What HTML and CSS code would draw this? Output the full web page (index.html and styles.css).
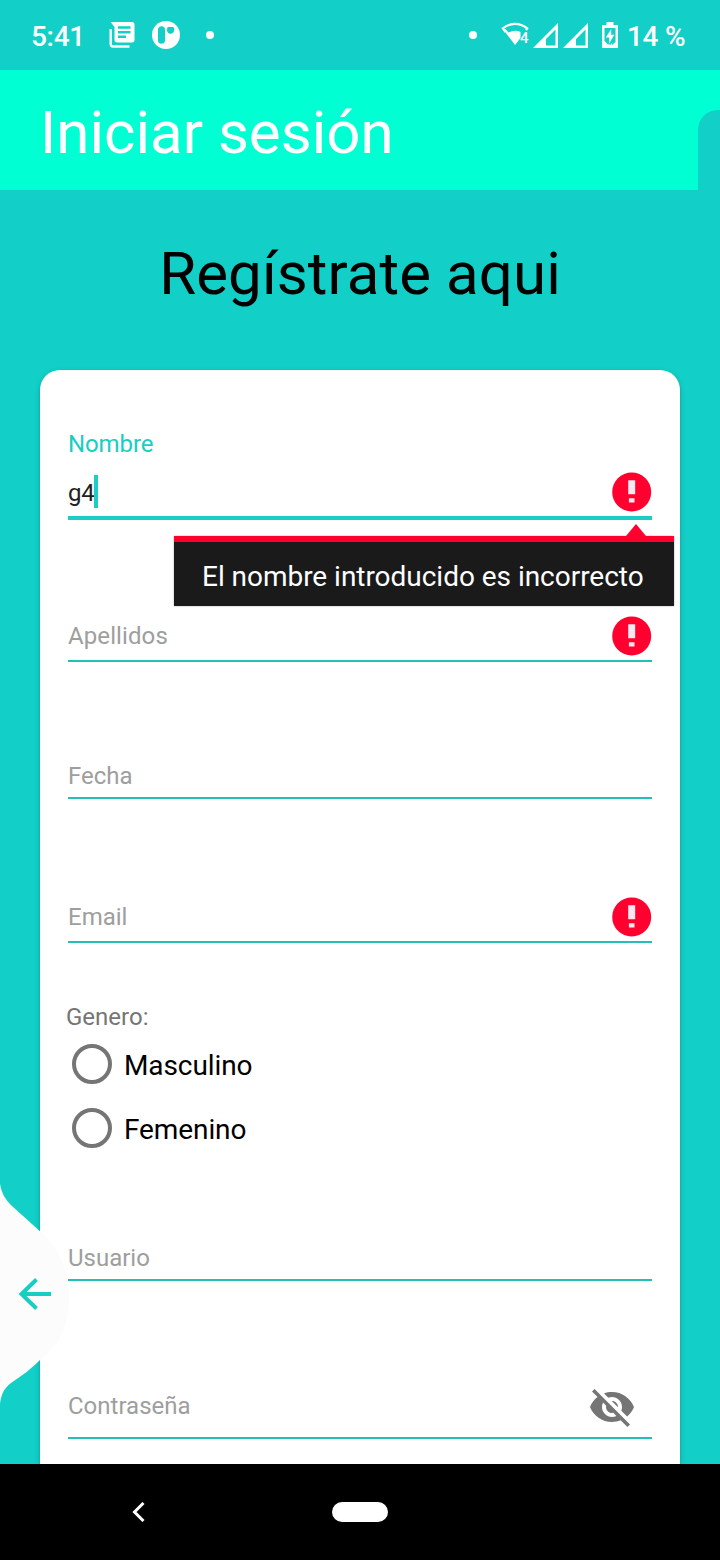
FILE: index.html
```html
<!DOCTYPE html>
<html lang="es">
<head>
<meta charset="utf-8">
<title>Iniciar sesión</title>
<link rel="stylesheet" href="styles.css">
</head>
<body>
<div class="screen">
  <div class="status">
    <span class="clock">5:41</span>
    <svg class="ico-news" width="26" height="26" viewBox="0 0 26 26"><path fill="#fff" fill-rule="evenodd" d="M1.500 0H23Q25.500 0 25.500 2.500V18Q25.500 20.500 23 20.500H8.500Q5.500 20.500 5.500 18V5ZM9 4.300V6.800H21.500V4.300ZM9 9V11.500H21.500V9ZM9 13.500V16H17V13.500Z"/><path fill="none" stroke="#fff" stroke-width="2.400" d="M1.700 7V22Q1.700 24.500 4 24.500H20.500"/></svg>
    <svg class="ico-app" width="28" height="28" viewBox="0 0 28 28"><circle cx="14" cy="14" r="14" fill="#fff"/><rect x="6" y="5.200" width="7" height="17.500" rx="3.500" fill="#12d0c7"/><path fill="#12d0c7" d="M16 6H20.500Q22.500 6 22.300 9Q21.800 12.700 18.500 12.700Q15 12.700 15 9Q15 6.500 16 6Z"/></svg>
    <span class="dot dot-left"></span>
    <span class="dot dot-right"></span>
    <svg class="ico-wifi" width="28" height="26" viewBox="0 0 28 26"><path d="M4.500 10L1.800 6.300Q14-2.500 26.200 6.300L25 8" fill="none" stroke="#fff" stroke-width="2.200"/><path d="M3 8.500L14 23L19.500 16V10Q14 7.500 7.500 10.500L4.500 7Z" fill="#fff"/><text class="wifi-num" x="19" y="20.500">4</text></svg>
    <svg class="ico-sig" width="25" height="25" viewBox="0 0 25 25"><path fill="#fff" fill-rule="evenodd" d="M25 0V25H0ZM22.500 6.500L13 16V22.500H22.500Z"/></svg>
    <svg class="ico-sig second" width="25" height="25" viewBox="0 0 25 25"><path fill="#fff" fill-rule="evenodd" d="M25 0V25H0ZM22.500 6.500L13 16V22.500H22.500Z"/></svg>
    <svg class="ico-bat" width="16" height="26" viewBox="0 0 16 26"><path fill="#fff" d="M4.500 0H11.500V3H16V26H0V3H4.500Z"/><path fill="#12d0c7" d="M2.500 6H13.500V20L10 23V21L12 18V7.500H4V18L6.500 21V23L2.500 19Z"/><path fill="#12d0c7" d="M4 7H12V19L8 23L4 19Z"/><path fill="#fff" d="M9.200 7L3.800 15.500H7.200V21.500L12.300 12.800H9.200Z"/></svg>
    <span class="percent">14 %</span>
  </div>
  <div class="header"><span class="login">Iniciar sesión</span><span class="corner"></span></div>
  <h1 class="heading">Regístrate aqui</h1>
  <div class="card">
    <div class="label">Nombre</div>
    <div class="field focused"><span class="value">g4</span><span class="caret"></span>
      <svg class="error" width="40" height="40" viewBox="0 0 40 40"><circle cx="19.700" cy="20" r="19.500" fill="#ff002f"/><path fill="#fbe8ee" d="M16.200 8.300H23.200V22.300H16.200ZM16.900 26.300H22.500V30.500H16.900Z"/></svg>
      <div class="tip"><svg class="arrow" width="20" height="12" viewBox="0 0 20 12"><path d="M0 12L10 0L20 12Z" fill="#ff002f"/></svg>El nombre introducido es incorrecto</div>
    </div>
    <div class="field apellidos"><span>Apellidos</span>
      <svg class="error" width="40" height="40" viewBox="0 0 40 40"><circle cx="19.700" cy="20" r="19.500" fill="#ff002f"/><path fill="#fbe8ee" d="M16.200 8.300H23.200V22.300H16.200ZM16.900 26.300H22.500V30.500H16.900Z"/></svg>
    </div>
    <div class="field fecha"><span>Fecha</span></div>
    <div class="field email"><span>Email</span>
      <svg class="error" width="40" height="40" viewBox="0 0 40 40"><circle cx="19.700" cy="20" r="19.500" fill="#ff002f"/><path fill="#fbe8ee" d="M16.200 8.300H23.200V22.300H16.200ZM16.900 26.300H22.500V30.500H16.900Z"/></svg>
    </div>
    <div class="group">Genero:</div>
    <div class="radio"><span class="ring"></span><span class="option">Masculino</span></div>
    <div class="radio"><span class="ring"></span><span class="option">Femenino</span></div>
    <div class="field usuario"><span>Usuario</span></div>
    <div class="field pass"><span>Contraseña</span>
      <svg class="eye" width="48" height="48" viewBox="0 0 24 24"><path fill="#757575" d="M12 7c2.760 0 5 2.240 5 5 0 .650-.130 1.260-.360 1.830l2.920 2.920c1.510-1.260 2.700-2.890 3.430-4.750-1.730-4.390-6-7.500-11-7.500-1.400 0-2.740.250-3.980.700l2.160 2.160C10.740 7.130 11.350 7 12 7zM2 4.270l2.280 2.280.460.460C3.080 8.300 1.780 10.020 1 12c1.730 4.390 6 7.500 11 7.500 1.550 0 3.030-.300 4.380-.840l.420.420L19.730 22 21 20.730 3.270 3 2 4.270zM7.530 9.800l1.550 1.550c-.050.210-.080.430-.080.650 0 1.660 1.340 3 3 3 .220 0 .440-.030.650-.080l1.550 1.550c-.670.330-1.410.530-2.200.530-2.760 0-5-2.240-5-5 0-.790.200-1.530.530-2.200zm4.310-.780l3.150 3.150.020-.160c0-1.660-1.340-3-3-3l-.170.010z"/></svg>
    </div>
  </div>
  <svg class="swipe" width="70" height="230" viewBox="0 0 70 230"><path fill="#fcfcfc" d="M0 4C2 14 5 19 12 26L43 54C60 70 69 92 69 117C69 145 59 166 40 180C31 189 23 195 11 203C4 208 1 215 0 224Z"/><path fill="none" stroke="#18cdc2" stroke-width="4" d="M51 114H22M36.500 99.500L21.500 114L36.500 128.500"/></svg>
  <div class="nav">
    <svg class="back" width="14" height="20" viewBox="0 0 14 20"><path d="M11.500 1L2.500 10L11.500 19" fill="none" stroke="#fff" stroke-width="3"/></svg>
    <span class="pill"></span>
  </div>
</div>
</body>
</html>
```
FILE: styles.css
```css
* { box-sizing: border-box; }
body { margin: 0; font-family: Roboto, "Noto Sans", sans-serif; }
.screen { position: relative; display: flex; flex-direction: column; width: 720px; height: 1560px; overflow: hidden; background: #12d0c7; }

.status { display: flex; align-items: center; height: 70px; padding: 0 35px 0 31px; color: #fff; font-size: 28px; font-weight: 500; letter-spacing: -.3px; white-space: nowrap; }
.status > * { flex: none; }
.clock { width: 78px; padding-top: 3px; }
.ico-app { margin-left: 17px; }
.dot { width: 8px; height: 8px; border-radius: 50%; background: #fff; }
.dot-left { margin-left: 26px; }
.dot-right { margin-left: 255px; }
.ico-wifi { margin-left: 24px; }
.wifi-num { font: 500 15px Roboto, sans-serif; fill: #fff; }
.ico-sig { margin-left: 4px; }
.ico-sig.second { margin-left: 5px; }
.ico-bat { margin-left: 14px; }
.percent { margin-left: 9px; padding-top: 3px; }

.header { display: flex; align-items: flex-end; justify-content: space-between; height: 120px; background: #00ffd3; }
.login { padding-left: 40px; height: 120px; line-height: 126px; font-size: 60px; color: #fff; }
.corner { width: 22px; height: 80px; border-radius: 20px 0 0 0; background: #12d0c7; }
.heading { margin: 0; height: 180px; line-height: 167px; text-align: center; font-size: 60px; font-weight: 400; letter-spacing: .08px; color: #000; }

.card { height: 1094px; margin: 0 40px; padding: 56px 28px 0; border-radius: 20px 20px 0 0; background: #fff; box-shadow: 0 2px 5px rgba(0, 60, 60, .35); font-size: 24px; }
.label { height: 36px; line-height: 36px; letter-spacing: -.1px; color: #18cdc2; }
.field { position: relative; display: flex; align-items: center; height: 50px; border-bottom: 2px solid #26bfb6; color: #9e9e9e; }
.focused { height: 52px; margin-top: 6px; border-bottom: 4px solid #1bcdc3; color: #212121; }
.value { padding-top: 2px; letter-spacing: -.2px; }
.caret { width: 4px; height: 33px; margin: -2px 0 0 -1px; background: #1bcdc3; }
.error { margin-left: auto; }
.apellidos { margin-top: 92px; letter-spacing: .1px; }
.fecha { height: 46px; margin-top: 91px; padding-top: 2px; }
.email { margin-top: 94px; }
.tip { position: absolute; z-index: 2; top: 68px; left: 106px; width: 500px; height: 70px; padding-left: 28px; border-top: 6px solid #ff002f; background: #1a1a1a; color: #fff; font-size: 28px; line-height: 69px; letter-spacing: -.03px; white-space: nowrap; box-shadow: 0 0 2px rgba(0, 0, 0, .3); }
.arrow { position: absolute; top: -18px; right: 28px; }
.group { height: 36px; margin: 56px 0 0 -2px; line-height: 36px; color: #757575; }
.radio { display: flex; align-items: center; gap: 12px; height: 64px; padding-left: 4px; font-size: 28px; letter-spacing: -.1px; color: #000; }
.option { padding-top: 2px; }
.group + .radio { margin-top: -3px; }
.ring { width: 40px; height: 40px; border: 4px solid #757575; border-radius: 50%; }
.usuario { height: 46px; margin-top: 75px; padding-top: 2px; }
.pass { height: 68px; margin-top: 90px; padding-top: 4px; }
.eye { margin: 1px 16px 0 auto; }

.swipe { position: absolute; left: 0; top: 1180px; }
.nav { position: relative; display: flex; align-items: center; height: 96px; padding-left: 132px; background: #000; }
.pill { width: 56px; height: 20px; margin-left: 186px; border-radius: 10px; background: #fff; }
```
